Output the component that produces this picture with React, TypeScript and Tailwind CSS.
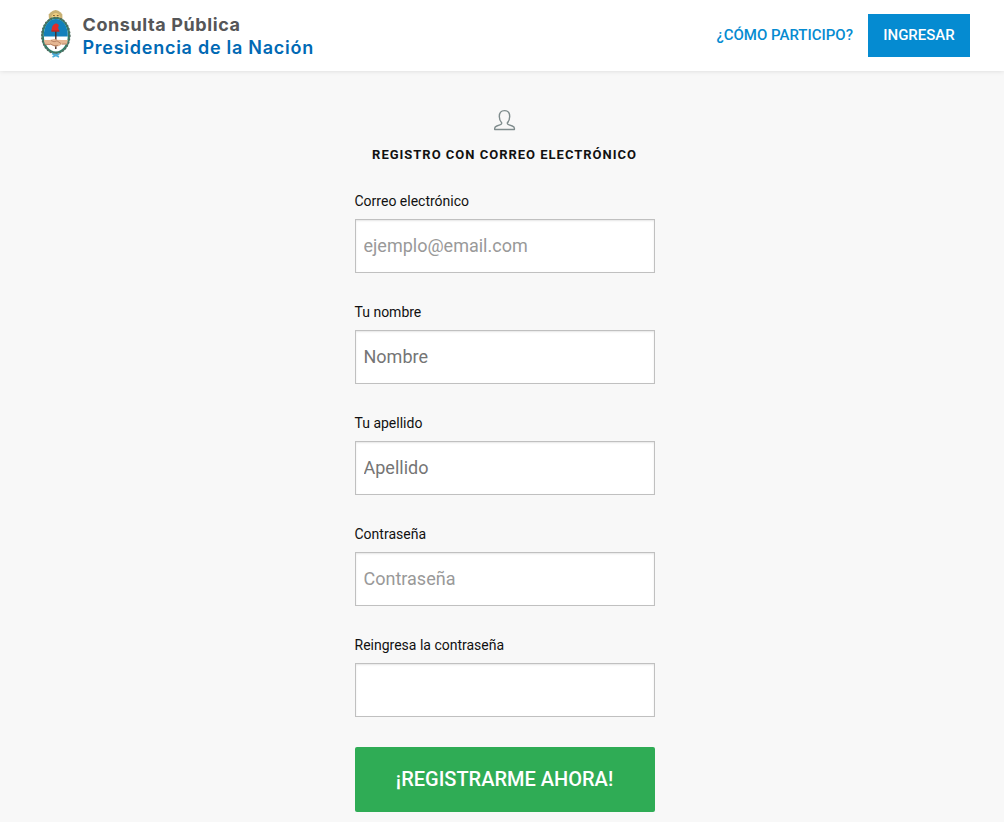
import React from "react";

type FieldProps = {
  id: string;
  label: string;
  type?: string;
  placeholder?: string;
  muted?: boolean;
};

function Field({ id, label, type = "text", placeholder, muted }: FieldProps) {
  return (
    <div className="flex flex-col">
      <label htmlFor={id} className="mb-2 -ml-[0.5px] h-5 text-[14px] leading-5 text-[#111]">
        {label}
      </label>
      <input
        id={id}
        type={type}
        placeholder={placeholder}
        className={
          "h-[54px] w-full border border-[#c0c0c0] bg-white pr-2 pb-px pl-[7.5px] text-[18px] shadow-[inset_0_1px_2px_rgba(0,0,0,0.1)] outline-none " +
          (muted ? "placeholder:text-[#999]" : "placeholder:text-[#757575]")
        }
      />
    </div>
  );
}

function Crest() {
  return (
    <svg className="h-[50px] w-8" viewBox="0 0 32 50" fill="none">
      <path d="M9 11 8.700 5.500l1.800-2L13 1.700l2.600-.6 2.700.6 2.500 1.800 1.500 2 .2 5.500z" fill="#c9b174" />
      <path d="M11 9.500c.3-3 2-5.500 4.700-5.500s4.700 2.500 5 5.500z" fill="#edcc80" />
      <path d="M13 6.500h1.800M16.800 6.500h1.800" stroke="#775523" strokeWidth=".9" />
      <ellipse cx="15.800" cy="26.500" rx="13.800" ry="17.800" fill="#2f7d66" stroke="#3f8470" strokeWidth="1.300" />
      <ellipse cx="15.800" cy="26.500" rx="13.900" ry="17.900" stroke="#55645c" strokeWidth="1.700" strokeDasharray="1.500 1.800" />
      <ellipse cx="15.800" cy="26.300" rx="12" ry="16.300" fill="#fff" />
      <path d="M3.800 27.500C3.500 17 8.700 10 15.800 10s12.300 7 12 17.500z" fill="#1380bb" />
      <path d="M15.800 21v19" stroke="#4b2b24" strokeWidth="1.400" />
      <path d="M11.400 22.500c.1-4 1.200-6.700 3.600-7.700 2-.8 4 .5 3.800 2.500l-.8 1.300 1.500 3.900z" fill="#e12c27" />
      <path d="M11.400 22h8" stroke="#9c2924" />
      <path d="m3.800 31 6 .1 4.400-1 3 .7 4.500.2 6.100.1-.7 4.100-5 .1-3.500 1.900-4.200.3-3.800-1.800-5.700-.1z" fill="#e5b793" />
      <path d="m11 31.500 3 1.300 3-1 4 2.800M10 34.800l4 1.800 4-.2M5 35.300l5 .2M27 35l-5 .2" stroke="#a76f52" strokeWidth=".7" />
      <path d="m12 44.500 7 3.500M19.500 44.500l-7 3.500M13 45.500h6" stroke="#4aacd8" strokeWidth="1.500" />
    </svg>
  );
}

export default function App() {
  return (
    <div className="flex h-[822px] flex-col overflow-hidden bg-[#f8f8f8] font-['Roboto',sans-serif] text-[#111]">
      <header className="z-10 flex h-[71px] shrink-0 items-start justify-between bg-white pr-[34px] pl-10 shadow-[0_0_5px_rgba(0,0,0,0.13)]">
        <a className="flex gap-[10.500px] pt-[9px]" href="#">
          <Crest />
          <span className="flex flex-col pt-1 font-['Inter',sans-serif] text-[18px] leading-[23px]">
            <span className="font-bold tracking-[0.6px] text-[#555658]">Consulta Pública</span>
            <span className="font-semibold tracking-[0.74px] text-[#0069b4]">Presidencia de la Nación</span>
          </span>
        </a>
        <nav className="flex items-center gap-[15px] pt-[14px] text-[15px] font-medium">
          <a href="#" className="text-[#058bd1]">¿CÓMO PARTICIPO?</a>
          <a href="#" className="flex h-[43px] w-[102px] items-center justify-center bg-[#058bd1] text-white">INGRESAR</a>
        </nav>
      </header>
      <main className="ml-[355px] flex w-[300px] flex-col pt-[38px]">
        <svg className="h-[22px] w-[22px] self-center" viewBox="0 0 22 22" fill="none" stroke="#7f8c8d" strokeWidth="1.400" strokeLinejoin="round">
          <path d="M7.800 14C6.200 12.500 5.300 10.300 5.300 7.500c0-4 1.700-5.900 5.200-5.900s5.200 1.900 5.200 5.900c0 2.800-.9 5-2.500 6.500 0 1 .7 1.500 1.900 1.900l3.200 1.100c1.500.5 2.100 1.100 2.100 2.200v1.300H.700v-1.300c0-1.100.6-1.700 2.100-2.200l3.100-1.100c1.200-.4 1.900-.9 1.900-1.900z" />
        </svg>
        <h1 className="mt-[15px] mr-px mb-[28px] h-[17px] text-center text-[13px] leading-[17px] font-bold tracking-[0.99px] whitespace-nowrap">
          REGISTRO CON CORREO ELECTRÓNICO
        </h1>
        <form className="flex flex-col">
          <div className="mb-[30px] flex flex-col gap-[29px]">
            <Field id="email" label="Correo electrónico" type="email" placeholder="ejemplo@email.com" muted />
            <Field id="nombre" label="Tu nombre" placeholder="Nombre" />
            <Field id="apellido" label="Tu apellido" placeholder="Apellido" />
            <Field id="password" label="Contraseña" type="password" placeholder="Contraseña" muted />
            <Field id="repeat" label="Reingresa la contraseña" type="password" />
          </div>
          <button type="button" className="h-[65px] rounded-[2px] bg-[#2fac55] pr-px pb-0.5 text-[20px] font-medium text-white">
            ¡REGISTRARME AHORA!
          </button>
        </form>
      </main>
    </div>
  );
}
